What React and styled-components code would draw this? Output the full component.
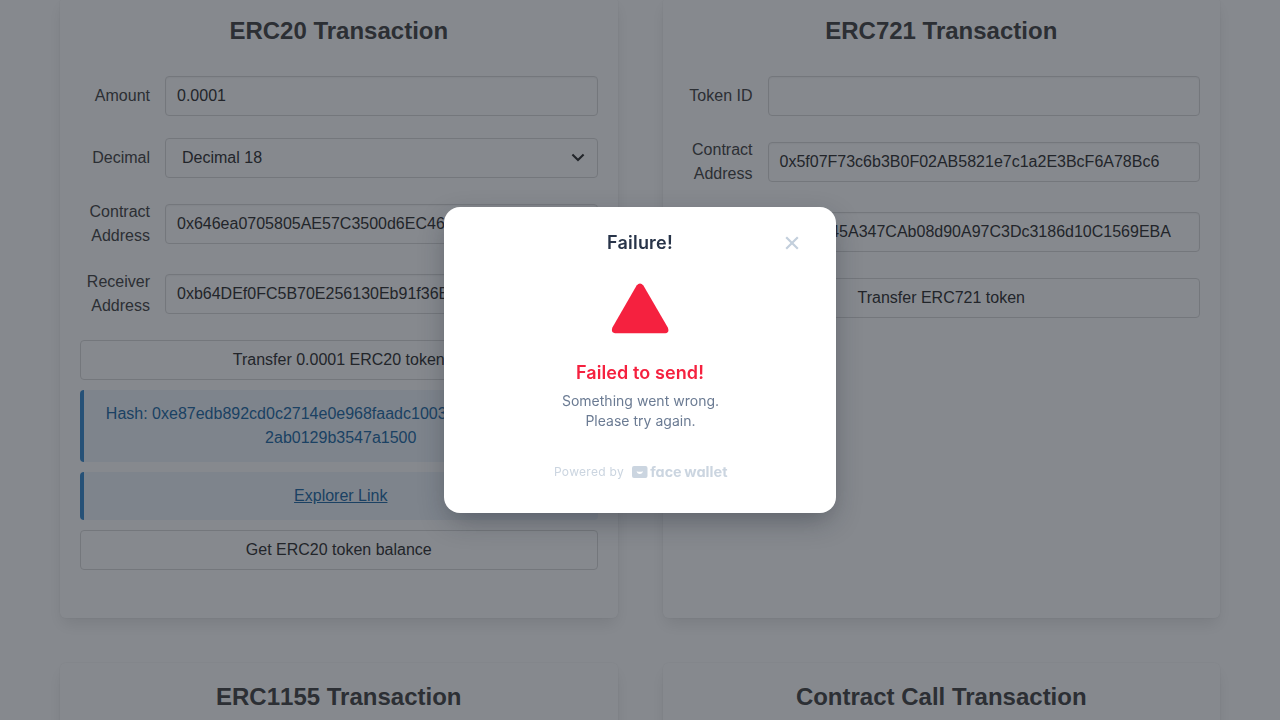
import React from "react";
import styled, { createGlobalStyle } from "styled-components";

const GlobalStyle = createGlobalStyle`
  *, *::before, *::after { box-sizing: border-box; }
  html { overflow: hidden; background: #fff; }
  body {
    margin: 0;
    color: #4a4a4a;
    font-family: "Liberation Sans", Arial, sans-serif;
    font-size: 16px;
    line-height: 24px;
  }
`;

const Page = styled.main`
  height: 720px;
  overflow: hidden;
  padding: 0 60px;
`;

const Board = styled.div`
  display: grid;
  grid-template-columns: 1fr 1fr;
  grid-template-rows: 621px 621px;
  gap: 45px;
  margin-top: -3px;
`;

const Card = styled.section`
  padding: 20px;
  border-radius: 6px;
  background: #fff;
  box-shadow: 0 8px 16px -2px rgba(10, 10, 10, 0.1), 0 0 0 1px rgba(10, 10, 10, 0.02);
`;

const CardTitle = styled.h2`
  margin: 0 0 32px;
  font-size: 24px;
  line-height: 27px;
  font-weight: 700;
  text-align: center;
`;

const Standard = styled.span`
  font-kerning: none;
`;

const Field = styled.div`
  display: flex;
  align-items: center;
  gap: 15px;
  margin-bottom: 22px;
`;

const Label = styled.label`
  flex: 0 0 70px;
  text-align: right;
`;

const Control = styled.div`
  display: flex;
  align-items: center;
  justify-content: space-between;
  flex: 1;
  min-width: 0;
  height: 40px;
  padding: ${(p) => (p.$select ? "0 12px 0 16px" : "0 11px")};
  border: 1px solid #dbdbdb;
  border-radius: 4px;
  color: #363636;
  white-space: nowrap;
  overflow: hidden;
  box-shadow: ${(p) => (p.$select ? "none" : "inset 0 1px 2px rgba(10, 10, 10, 0.05)")};
`;

const Button = styled.button`
  display: block;
  width: 100%;
  height: 40px;
  margin: 0 0 10px;
  padding: 0;
  border: 1px solid #dbdbdb;
  border-radius: 4px;
  background: #fff;
  color: #363636;
  font: inherit;
`;

const Message = styled.div`
  margin-bottom: 10px;
  padding: 12px 20px;
  border-left: 4px solid #3e8ed0;
  border-radius: 4px;
  background: #eff5fb;
  color: #296fa8;
  text-align: center;
  word-break: break-all;
`;

const Overlay = styled.div`
  position: fixed;
  inset: 0;
  display: flex;
  align-items: center;
  justify-content: center;
  background: rgba(13, 20, 29, 0.5);
`;

const Dialog = styled.div`
  display: flex;
  flex-direction: column;
  align-items: center;
  width: 392px;
  height: 306px;
  padding: 24px 36px 0;
  border-radius: 16px;
  background: #fff;
  font-family: Inter, sans-serif;
  box-shadow: 0 10px 28px -4px rgba(24, 32, 46, 0.4);
`;

const DialogHeader = styled.header`
  display: grid;
  grid-template-columns: 1fr auto 1fr;
  align-items: center;
  width: 100%;
  height: 24px;
`;

const DialogTitle = styled.h3`
  grid-column: 2;
  margin: 0;
  color: #283449;
  font-size: 18px;
  font-weight: 600;
  letter-spacing: 0.2px;
`;

const CloseButton = styled.button`
  display: flex;
  justify-self: end;
  padding: 0;
  border: 0;
  background: none;
`;

const Warning = styled.svg`
  display: block;
  margin-top: 27px;
`;

const Heading = styled.p`
  margin: 27px 0 6px;
  color: #f5213f;
  font-size: 18px;
  line-height: 24px;
  font-weight: 600;
  letter-spacing: 0.1px;
`;

const Description = styled.p`
  margin: 0;
  padding-left: 1px;
  color: #6b7b93;
  font-size: 14px;
  line-height: 20px;
  letter-spacing: 0.02px;
  text-align: center;
`;

const Footer = styled.footer`
  display: flex;
  align-items: center;
  height: 16px;
  margin-top: 33px;
  padding-left: 1px;
  color: #cbd5e0;
  font-size: 12px;
  line-height: 16px;
  letter-spacing: 0.3px;
`;

const Brand = styled.svg`
  display: block;
  margin-left: 8px;
  overflow: visible;
`;

const Wordmark = styled.g`
  font-family: Inter, sans-serif;
  font-size: 14px;
  font-weight: 700;
  letter-spacing: 0;
  font-feature-settings: "cv11";
`;

const TextField = ({ label, value }) => (
  <Field>
    <Label>{label}</Label>
    <Control>{value}</Control>
  </Field>
);

const ChevronDown = () => (
  <svg width="14" height="10" viewBox="0 0 14 10" fill="none">
    <path d="M1.4 1.5 7 7 12.6 1.5" stroke="#363636" strokeWidth="2.1" />
  </svg>
);

const FaceWalletLogo = () => (
  <Brand width="95" height="16" viewBox="0 0 95 16" fill="#cbd5e0">
    <path
      fillRule="evenodd"
      d="M2 2h11.5q2 0 2 2v8q0 2-2 2H2q-2 0-2-2V4q0-2 2-2Zm2.6 5.2c.3 1.6 1.5 2.7 3.2 2.7s2.9-1.1 3.2-2.7q-3.2 1-6.4 0Z"
    />
    <Wordmark>
      <text x="18.2" y="13.4" textLength="31.5" lengthAdjust="spacingAndGlyphs">face</text>
      <text x="52.3" y="13.4" textLength="43.2" lengthAdjust="spacingAndGlyphs">wallet</text>
    </Wordmark>
  </Brand>
);

export default function App() {
  return (
    <>
      <GlobalStyle />
      <Page>
        <Board>
          <Card>
            <CardTitle>ERC20 Transaction</CardTitle>
            <TextField label="Amount" value="0.0001" />
            <Field>
              <Label>Decimal</Label>
              <Control $select>
                Decimal 18
                <ChevronDown />
              </Control>
            </Field>
            <TextField label="Contract Address" value="0x646ea0705805AE57C3500d6EC46B2E3a1c7F9d04" />
            <TextField label="Receiver Address" value="0xb64DEf0FC5B70E256130Eb91f36B1d628b4cD0E7" />
            <Button>Transfer 0.0001 ERC20 token</Button>
            <Message>Hash: 0xe87edb892cd0c2714e0e968faadc10036b50e9d84f7ae032ab0129b3547a1500</Message>
            <Message><u>Explorer Link</u></Message>
            <Button>Get ERC20 token balance</Button>
          </Card>
          <Card>
            <CardTitle>ERC721 Transaction</CardTitle>
            <TextField label="Token ID" value="" />
            <TextField label="Contract Address" value="0x5f07F73c6b3B0F02AB5821e7c1a2E3BcF6A78Bc6" />
            <TextField label="Receiver Address" value="0x2fD745A347CAb08d90A97C3Dc3186d10C1569EBA" />
            <Button>Transfer ERC721 token</Button>
          </Card>
          <Card>
            <CardTitle><Standard>ERC1155</Standard> Transaction</CardTitle>
          </Card>
          <Card>
            <CardTitle>Contract Call Transaction</CardTitle>
          </Card>
        </Board>
      </Page>
      <Overlay>
        <Dialog role="dialog">
          <DialogHeader>
            <DialogTitle>Failure!</DialogTitle>
            <CloseButton aria-label="Close">
              <svg width="16" height="16" viewBox="0 0 16 16" fill="none">
                <path d="m2.2 2.2 11.6 11.6m0-11.6-11.6 11.6" stroke="#c3cfdc" strokeWidth="2.2" />
              </svg>
            </CloseButton>
          </DialogHeader>
          <Warning width="58" height="52" viewBox="0 0 58 52">
            <path
              d="M25.6 3.4Q29-.6 32.4 3.4L56.8 45.4Q58.8 50.6 54.4 51.3H4Q-.4 50.6 1.4 45.4Z"
              fill="#f5213f"
            />
          </Warning>
          <Heading>Failed to send!</Heading>
          <Description>
            Something went wrong.
            <br />
            Please try again.
          </Description>
          <Footer>
            Powered by
            <FaceWalletLogo />
          </Footer>
        </Dialog>
      </Overlay>
    </>
  );
}
